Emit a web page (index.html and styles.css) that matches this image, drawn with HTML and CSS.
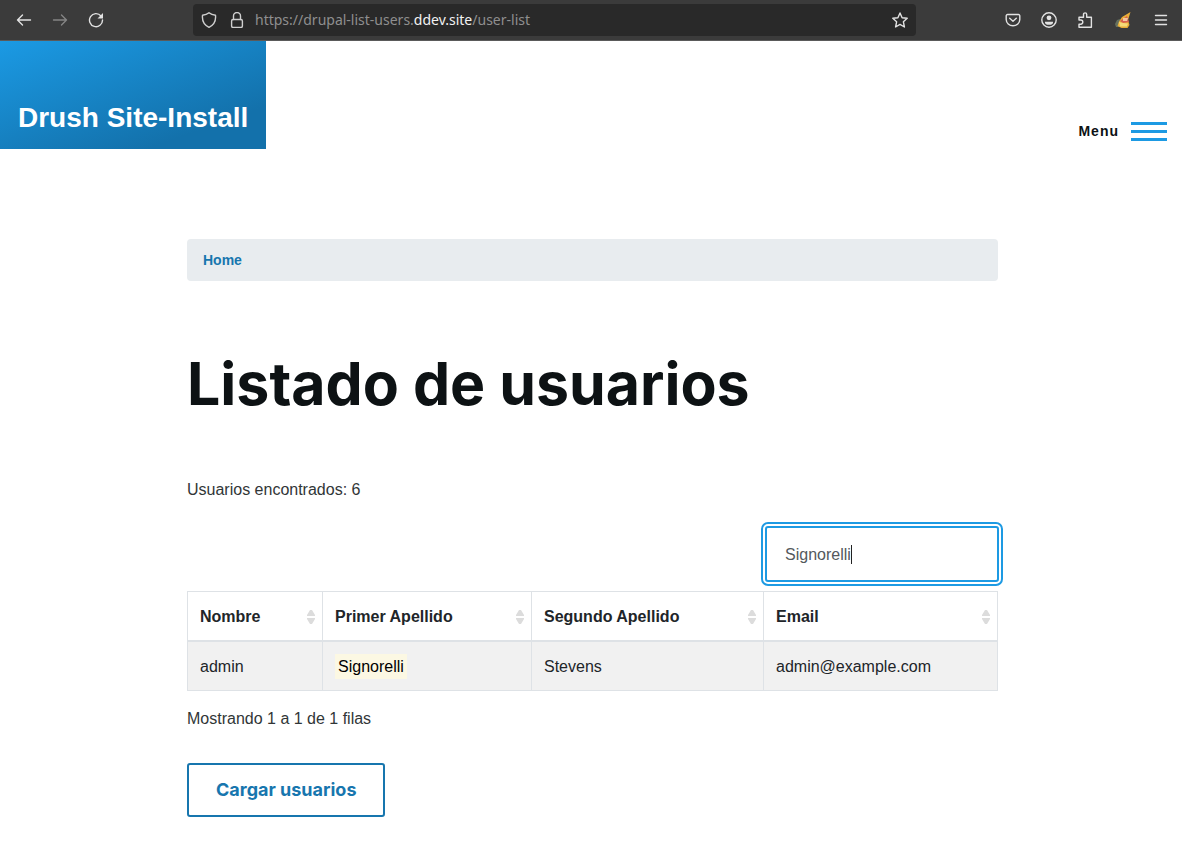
FILE: index.html
```html
<!DOCTYPE html>
<html lang="es">
<head>
<meta charset="utf-8">
<meta name="viewport" content="width=device-width, initial-scale=1">
<title>Listado de usuarios</title>
<link rel="stylesheet" href="styles.css">
</head>
<body>
<div class="toolbar">
  <div class="nav-buttons">
    <button class="tool" aria-label="Back"><svg width="16" height="16" viewBox="0 0 16 16"><path d="M14.500 8H1.500M6.500 3L1.500 8l5 5"/></svg></button>
    <button class="tool tool-off" aria-label="Forward" disabled><svg width="16" height="16" viewBox="0 0 16 16"><path d="M1.500 8h13M9.500 3l5 5-5 5"/></svg></button>
    <button class="tool" aria-label="Reload"><svg width="16" height="16" viewBox="0 0 16 16"><path d="M13 4A6.500 6.500 0 1 0 14.500 8"/><path class="solid" d="M15 1v5.500H9.500z"/></svg></button>
  </div>
  <div class="address">
    <svg class="glyph" width="16" height="16" viewBox="0 0 16 16"><path d="M8 .8C6.300 2.200 4 3 1.500 3.200C1 8 3.200 13 8 15.300C12.800 13 15 8 14.500 3.200C12 3 9.700 2.200 8 .8z"/></svg>
    <svg class="glyph" width="16" height="16" viewBox="0 0 16 16"><rect x="2.600" y="7.500" width="10.800" height="7.900" rx="1.500"/><path d="M4.500 7.500V4a3.500 3.500 0 0 1 7 0v3.500"/></svg>
    <div class="url">https://drupal-list-users.<span class="domain">ddev.site</span>/user-list</div>
    <button class="tool star" aria-label="Bookmark"><svg width="16" height="16" viewBox="0 0 16 16"><path d="M8 1l2.100 4.700 5.100.6-3.800 3.500 1 5.200L8 12.400 3.600 15l1-5.200L.8 6.300l5.100-.6z"/></svg></button>
  </div>
  <div class="ext-buttons">
    <div class="ext-group">
      <button class="tool" aria-label="Pocket"><svg width="16" height="16" viewBox="0 0 16 16"><path d="M2.500 2.500h11a1.300 1.300 0 0 1 1.300 1.300V7.500a6.800 6.300 0 0 1-13.600 0V3.800a1.300 1.300 0 0 1 1.300-1.300zM4.700 6.300L8 9.300l3.300-3"/></svg></button>
      <button class="tool" aria-label="Account"><svg width="16" height="16" viewBox="0 0 16 16"><circle cx="8" cy="8" r="7.200"/><circle class="solid" cx="8" cy="5.800" r="2.400"/><path class="solid" d="M4 9.800h8v.7a4 2.300 0 0 1-8 0z"/></svg></button>
      <button class="tool" aria-label="Extensions"><svg width="16" height="16" viewBox="0 0 16 16"><path d="M2 8V5.200H6.500V2.500a1.600 1.600 0 0 1 3.200 0v2.700h4.700v10H2v-3h1.700a2 2 0 0 0 0-4.200z"/></svg></button>
    </div>
    <button class="tool" aria-label="Cheese extension"><svg width="16" height="16" viewBox="0 0 16 16"><path fill="#65705f" stroke="none" d="M1 15L0 12l2-4 3-1v8z"/><path fill="#e8ad38" stroke="none" d="M15.500 0L7 5 4 9.500 2.500 14l4 2h6l2-3-1.500-5z"/><path fill="#d9604f" stroke="none" d="M12 4L5 9l3 2 6-1-1-3z"/><path fill="#f6db78" stroke="none" d="M4 10l4 1 5 .5-1 3H5z"/><path fill="#f2c6a0" stroke="none" d="M8 6l5 0-1 3-4 0z"/></svg></button>
    <button class="tool" aria-label="Open menu"><svg width="16" height="16" viewBox="0 0 16 16"><path d="M2.500 3.500h11M2.500 8h11M2.500 12.500h11"/></svg></button>
  </div>
</div>

<header class="site-header">
  <a class="brand" href="#">Drush Site-Install</a>
  <button class="menu"><span>Menu</span><span class="bars"></span></button>
</header>

<main class="content">
  <nav class="breadcrumb" aria-label="Breadcrumb"><a href="#">Home</a></nav>
  <h1 class="title">Listado de usuarios</h1>
  <p class="found">Usuarios encontrados: 6</p>
  <div class="search-row">
    <div class="search">
      <input class="search-input" type="text" aria-label="Buscar" value="Signorelli">
      <span class="caret"></span>
    </div>
  </div>
  <table class="users">
    <colgroup><col class="c-name"><col class="c-first"><col class="c-second"><col></colgroup>
    <thead>
      <tr>
        <th scope="col"><div class="head">Nombre<svg class="sort" width="8" height="14" viewBox="0 0 8 14"><path d="M0 6V5l3-5h2l3 5v1zM0 8h8v1l-3 5H3L0 9z"/></svg></div></th>
        <th scope="col"><div class="head">Primer Apellido<svg class="sort" width="8" height="14" viewBox="0 0 8 14"><path d="M0 6V5l3-5h2l3 5v1zM0 8h8v1l-3 5H3L0 9z"/></svg></div></th>
        <th scope="col"><div class="head">Segundo Apellido<svg class="sort" width="8" height="14" viewBox="0 0 8 14"><path d="M0 6V5l3-5h2l3 5v1zM0 8h8v1l-3 5H3L0 9z"/></svg></div></th>
        <th scope="col"><div class="head">Email<svg class="sort" width="8" height="14" viewBox="0 0 8 14"><path d="M0 6V5l3-5h2l3 5v1zM0 8h8v1l-3 5H3L0 9z"/></svg></div></th>
      </tr>
    </thead>
    <tbody>
      <tr><td>admin</td><td><mark class="hit">Signorelli</mark></td><td>Stevens</td><td>admin@example.com</td></tr>
    </tbody>
  </table>
  <p class="summary">Mostrando 1 a 1 de 1 filas</p>
  <button class="load">Cargar usuarios</button>
</main>
</body>
</html>
```
FILE: styles.css
```css
* { box-sizing: border-box; }
body {
  margin: 0;
  background: #fff;
  color: #313637;
  font: 16px/24px "Liberation Sans", Arial, sans-serif;
}
button { border: 0; background: none; padding: 0; font: inherit; color: inherit; }

.toolbar {
  display: grid;
  grid-template-columns: 177px minmax(0, 723px) 1fr;
  column-gap: 16px;
  align-items: center;
  height: 41px;
  padding-bottom: 1px;
  background: #3b3b3b;
  border-bottom: 1px solid #5a5a5a;
  color: #e2e2e2;
}
.nav-buttons { display: flex; gap: 20px; padding-left: 16px; }
.ext-buttons { display: flex; justify-content: flex-end; gap: 22px; padding-right: 13px; }
.ext-group { display: flex; gap: 20px; }
.tool { display: flex; }
.tool-off { color: #858585; }
.toolbar svg { display: block; fill: none; stroke: currentColor; stroke-width: 1.4; stroke-linejoin: round; stroke-linecap: round; }
.toolbar .solid { fill: currentColor; stroke: none; }
.address {
  display: flex;
  align-items: center;
  gap: 12px;
  height: 32px;
  padding: 0 8px;
  background: #292929;
  border-radius: 4px;
}
.glyph { flex: none; color: #cfcfcf; }
.url { flex: 1; margin-left: -2px; color: #8f8f8f; font: 14px/20px "Noto Sans", sans-serif; white-space: nowrap; overflow: hidden; }
.domain { color: #f2f2f2; }

.site-header { display: flex; justify-content: space-between; align-items: flex-end; height: 108px; padding-right: 15px; }
.brand {
  align-self: stretch;
  display: flex;
  align-items: flex-end;
  padding: 0 18px 15px;
  background: linear-gradient(160deg, #1b9ae4 0%, #1371ab 79%);
  color: #fff;
  font-size: 28px;
  line-height: 32px;
  font-weight: 700;
  text-decoration: none;
  white-space: nowrap;
}
.menu { display: flex; align-items: center; gap: 12px; padding-bottom: 8px; color: #0d1214; font-size: 14px; line-height: 20px; font-weight: 700; letter-spacing: 1px; }
.bars { width: 36px; height: 19px; border: solid #1d9ae3; border-width: 3px 0; background: linear-gradient(#1d9ae3, #1d9ae3) center / 36px 3px no-repeat; }

.content { padding: 90px 184px 35px 187px; }
.breadcrumb { padding: 9px 16px; background: #e8ecef; border-radius: 4px; font-size: 14px; font-weight: 700; }
.breadcrumb a { color: #1776ae; text-decoration: none; }
.title { margin: 67px 0 58px; color: #0d1214; font: 700 59px/72px Inter, sans-serif; }
.found { margin: 0 0 24px; }
.search-row { display: flex; justify-content: flex-end; margin-right: -1px; }
.search { position: relative; }
.search-input {
  display: block;
  width: 234px;
  height: 56px;
  padding: 2px 18px 0;
  border: 2px solid #1d9ae3;
  border-radius: 3px;
  outline: 2px solid #1d9ae3;
  outline-offset: 2px;
  background: #fff;
  color: #54595d;
  font: inherit;
}
.caret { position: absolute; left: 86px; top: 19px; width: 1px; height: 19px; background: #222; }

.users { width: 100%; margin-top: 9px; border-collapse: collapse; table-layout: fixed; color: #212529; }
.c-name { width: 135px; }
.c-first { width: 209px; }
.c-second { width: 232px; }
.users th, .users td { padding: 13px 12px 11px; border: 1px solid #dee2e6; text-align: left; }
.users thead th { border-bottom-width: 2px; padding-right: 7px; }
.users tbody tr { background: #f1f1f1; }
.head { display: flex; align-items: center; justify-content: space-between; white-space: nowrap; }
.sort { fill: #dcdcdc; }
.hit { padding: 4px 3px; background: #fcf8e3; color: #000; }
.summary { margin: 16px 0 32px; }
.load {
  height: 54px;
  padding: 0 27px;
  border: 2px solid #1776ae;
  border-radius: 3px;
  color: #1776ae;
  font: 700 18px/24px Inter, sans-serif;
}
```
